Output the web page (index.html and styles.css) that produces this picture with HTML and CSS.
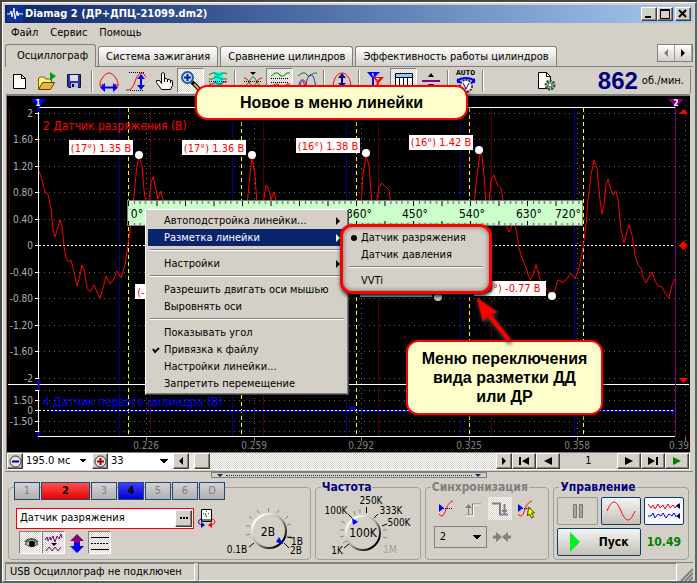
FILE: index.html
```
<!DOCTYPE html>
<html lang="ru">
<head>
    <meta charset="UTF-8">
    <meta name="viewport" content="width=device-width, initial-scale=1.0">
    <title>Diamag 2</title>
    <link rel="stylesheet" href="styles.css">
</head>
<body>
<div class="window">

    <!-- Заголовок -->
    <header class="titlebar">
        <svg class="app-icon" width="16" height="16" viewBox="0 0 16 16">
            <rect width="16" height="16" fill="#10309c"/>
            <path d="M0 8h3l1-3 1 6 2-9 1 11 2-8 1 5 1-3 1 1h3" fill="none" stroke="#fff"/>
        </svg>
        <h1 class="title">Diamag 2 (ДР+ДПЦ-21099.dm2)</h1>
        <div class="window-buttons">
            <button class="btn3d" aria-label="Свернуть"><svg width="10" height="10"><path d="M1 8h6" stroke="#000" stroke-width="2"/></svg></button>
            <button class="btn3d" aria-label="Развернуть"><svg width="10" height="10"><path d="M.5 0v9.5h9V1" fill="none" stroke="#000"/><path d="M0 1h10" stroke="#000" stroke-width="2"/></svg></button>
            <button class="btn3d close" aria-label="Закрыть"><svg width="10" height="10"><path d="M1 1l7 7M8 1l-7 7" stroke="#000" stroke-width="2"/></svg></button>
        </div>
    </header>

    <nav class="menubar">
        <a href="#">Файл</a>
        <a href="#">Сервис</a>
        <a href="#">Помощь</a>
    </nav>

    <!-- Вкладки -->
    <div class="tabs">
        <button class="tab active">Осциллограф</button>
        <button class="tab">Система зажигания</button>
        <button class="tab">Сравнение цилиндров</button>
        <button class="tab">Эффективность работы цилиндров</button>
        <div class="tab-scroll">
            <button aria-label="Назад"><svg width="6" height="8"><path d="M5 0v8L1 4z" fill="#808080"/></svg></button>
            <button aria-label="Вперёд"><svg width="6" height="8"><path d="M1 0v8l4-4z"/></svg></button>
        </div>
    </div>

    <!-- Панель инструментов -->
    <div class="toolbar">
        <button class="tool" aria-label="Новый"><svg width="24" height="24"><path d="M4.5 5.5h8l4 4v10h-12z" fill="#fff" stroke="#000"/><path d="M12.5 5.5v4h4" fill="none" stroke="#000"/></svg></button>
        <button class="tool" aria-label="Открыть"><svg width="24" height="24"><path d="M2.500 20V9l2-1h4l1 2h6v4" fill="#fff080" stroke="#806000"/><path d="M2.500 20.500l4-7h12l-4 7z" fill="#e8b838" stroke="#604000"/><path d="M14 3v9l6-5z" fill="#00a020"/></svg></button>
        <button class="tool" aria-label="Сохранить"><svg width="24" height="24"><path d="M4.5 5.5h13v13h-12l-1-1z" fill="#3030a0" stroke="#101040"/><path d="M7 6h8v6H7z" fill="#dde"/><path d="M8 14h7v5H8z" fill="#b8c4d8"/><path d="M9 15h2v3H9z" fill="#003"/></svg></button>
        <span class="divider"></span>
        <button class="tool" aria-label="Ширина"><svg width="24" height="24"><path d="M2 17C1 13 6 4 11 4s10 9 9 13l-3-2M2 17l3-2" fill="none" stroke="#f00"/><path d="M5 18.5h12" stroke="#00f" stroke-width="2"/><path d="M7 14v9l-5-4.5zM15 14v9l5-4.500z" fill="#00f"/></svg></button>
        <button class="tool" aria-label="Высота"><svg width="24" height="24"><path d="M1 21c11 2 7-18 17-17l3 4" fill="none" stroke="#f00"/><path d="M4 3.5h16M5 21.5h14" stroke="#000" stroke-dasharray="1 1"/><path d="M16 8v10" stroke="#00f" stroke-width="2"/><path d="M12 10h8l-4-5zM12 16h8l-4 5z" fill="#00f"/></svg></button>
        <button class="tool" aria-label="Рука"><svg width="24" height="24"><path d="M9.5 20.5l-5-7v-2h3l2 3V4.5q1.500-2 3 0v5q1.500-1 3 1 1.500-1 3 1 2-1 2 1v4l-2 4z" fill="#fff" stroke="#000"/><path d="M12.5 9v4M15.500 10v3M18.500 11v3" stroke="#000"/></svg></button>
        <button class="tool pressed" aria-label="Лупа"><svg width="24" height="24"><path d="M13 13l7 7" stroke="#000" stroke-width="4"/><path d="M15 15l5 5" stroke="#e0b030" stroke-width="2"/><circle cx="8.5" cy="8.5" r="5.5" fill="#c8e4ff" stroke="#2060a0" stroke-width="2"/><path d="M5 8.5h7M8.5 5v7" stroke="#0020b0" stroke-width="2"/></svg></button>
        <button class="tool" aria-label="Область"><svg width="24" height="24"><path d="M8 3h9v20H8z" fill="#0ff"/><path d="M3 6l3-2h3l3 2h2l3-2h2l2 1M3 10h4l2-2h3l3 2h6" fill="none" stroke="#080"/><path d="M3 15h4l2-2 3 2h3l3-2h3" fill="none" stroke="#c00"/><path d="M3 12.5h18" stroke="#000" stroke-dasharray="1 1"/></svg></button>
        <span class="divider"></span>
        <button class="tool" aria-label="Совместить оси"><svg width="24" height="24"><path d="M9 3h6l-3 3z"/><path d="M3 17c5 0 6-9 9-9s4 9 9 9" fill="none" stroke="#080"/><path d="M3 9c5 0 6 8 9 8s4-8 9-8" fill="none" stroke="#d00"/><path d="M3 12.5h18" stroke="#000" stroke-dasharray="1 1"/></svg></button>
        <button class="tool pressed" aria-label="Разделить оси"><svg width="24" height="24"><path d="M3 7l4-3h3l3 3h2l4-3h3" fill="none" stroke="#080"/><path d="M3 18l4-3h3l3 3h2l4-3h3" fill="none" stroke="#d00"/><path d="M3 9.5h18M3 13.5h18" stroke="#000" stroke-dasharray="1 1"/></svg></button>
        <button class="tool" aria-label="Наложить"><svg width="24" height="24"><path d="M3 7l4-3h3l3 3h2l4-3h3" fill="none" stroke="#080"/><path d="M3 20c3-15 6-9 7 0M10 20c3-19 9-19 11 0" fill="none" stroke="#22d"/><path d="M4 20c3-12 6-12 8 0" fill="none" stroke="#d00"/></svg></button>
        <span class="divider"></span>
        <button class="tool" aria-label="Амплитуда"><svg width="24" height="24"><path d="M3 19C3 10 7 4 12 4s9 6 9 15" fill="none" stroke="#f00"/><path d="M12 7v10" stroke="#008" stroke-width="2"/><path d="M8 9h8l-4-5zM8 14h8l-4 4z" fill="#008"/></svg></button>
        <span class="divider"></span>
        <button class="tool" aria-label="Маркеры"><svg width="24" height="24"><path d="M8 9v12" stroke="#00f" stroke-width="2"/><path d="M2 3h13L8 10z" fill="#00f"/><path d="M12.5 14v8" stroke="#f00" stroke-width="2"/><path d="M8 8h11l-6 7z" fill="#f00"/><path d="M7 4.5h1v3M11 9.5h3l-2 2" fill="none" stroke="#fff"/><path d="M15 16.500h6" stroke="#008"/></svg></button>
        <button class="tool pressed" aria-label="Таблица"><svg width="24" height="24"><path d="M3.500 4.500h17v17h-17z" fill="#fff" stroke="#000"/><path d="M4 5h16v3H4z" fill="#8cf"/><path d="M4 8.5h17M7.5 8v13M11.500 8v13M15.500 8v13" stroke="#000"/></svg></button>
        <button class="tool" aria-label="Линейка"><svg width="24" height="24"><path d="M9 8h6l-3-4zM9 15h6l-3 4z"/><path d="M3 12h18" stroke="#808" stroke-width="2"/></svg></button>
        <span class="divider"></span>
        <button class="tool auto" aria-label="Авто"><span>AUTO</span><svg width="22" height="16" viewBox="0 0 22 16"><circle cx="11" cy="9" r="6" fill="#fff" stroke="#333" stroke-dasharray="2 1" stroke-width="2"/><path d="M2 4c5-4 13-4 18 0" fill="none" stroke="#00f" stroke-width="2"/><path d="M2 1v5h5zM20 1v5h-5z" fill="#00f"/><path d="M8 6l3 6 3-6" fill="none" stroke="#00a"/></svg></button>
        <span class="divider"></span>
        <button class="tool page-setup" aria-label="Настройки страницы"><svg width="24" height="24"><path d="M4.5 3.5h8l4 4v12h-12z" fill="#fff" stroke="#000"/><path d="M12.5 3.5v4h4" fill="none" stroke="#000"/><circle cx="16" cy="16" r="4" fill="#cec" stroke="#354" stroke-width="3" stroke-dasharray="2 1"/><circle cx="16" cy="16" r="2" fill="#efe" stroke="#465"/></svg></button>
        <div class="rpm"><b>862</b> <span>об./мин.</span></div>
    </div>

    <!-- Осциллограмма -->
    <main class="scope">
        <svg class="chart" viewBox="7 96 683 356">
            <defs>
                <!-- деления линейки: 45 градусов -->
                <pattern id="ruler-ticks" x="128" y="201" width="28.5" height="24" patternUnits="userSpaceOnUse">
                    <path d="M.5 0v5M.5 20v4" stroke="#000"/>
                    <path d="M6.5 0v3M12 0v3M17.5 0v3M23.5 0v3M6.5 22v2M12 22v2M17.5 22v2M23.5 22v2" stroke="#445544"/>
                </pattern>
            </defs>
            <rect x="7" y="96" width="683" height="356"/>

            <!-- Сетка -->
            <path class="grid" d="M39 113.5H685M39 139.5H685M39 166.5H685M39 192.5H685M39 219.5H685M39 272.5H685M39 298.5H685M39 325.5H685M39 351.5H685M39 378.5H685M39 390.5H675M39 400.5H675M39 421.5H675M39 431.5H675"/>
            <path class="grid" d="M146.5 113V436M254.5 113V436M361.5 113V436M577.5 113V436M685.5 100V436"/>
            <path class="mark-blue" d="M119.5 108V436M232.5 108V436M346.5 108V436M460.5 108V436M574.5 108V436"/>
            <path class="mark-red" d="M9.5 108V436M150.5 108V436M263.5 108V436M378.5 108V436M491.5 108V436"/>
            <path class="mark-yellow" d="M128.5 108V436M241.5 108V436M356.5 108V436M469.5 108V436M583.5 108V436"/>

            <!-- Оси -->
            <path class="axis" d="M38 107.5H675M8 384.5H689M38 436.5H675M38.5 107V436"/>
            <path class="axis" d="M35 113.5h4M35 139.5h4M35 166.5h4M35 192.5h4M35 219.5h4M35 245.5h4M35 272.5h4M35 298.5h4M35 325.5h4M35 351.5h4M35 378.5h4M35 390.5h4M35 400.5h4M35 410.5h4M35 421.5h4M35 431.5h4"/>
            <path class="axis-ticks" d="M146.5 437v4M254.5 437v4M361.5 437v4M469.5 437v4M577.5 437v4M685.5 437v4"/>
            <path class="zero" d="M39 245.5H675"/>
            <path d="M50 411H350l1-3h3l1 3H675" fill="none" stroke="#00f" stroke-width="2"/>
            <path class="zero" d="M39 410.5H675"/>
            <path d="M38.5 104v8M38.5 379v11M38.5 432v4" stroke="#00f" stroke-width="2"/>
            <path d="M675.5 106V436" stroke="#800080"/>

            <g class="y-labels">
                <text x="33" y="117">2</text>
                <text x="33" y="143">1.60</text>
                <text x="33" y="170">1.20</text>
                <text x="33" y="196">0.80</text>
                <text x="33" y="223">0.40</text>
                <text x="33" y="249">0</text>
                <text x="33" y="276">-0.40</text>
                <text x="33" y="302">-0.80</text>
                <text x="33" y="329">-1.20</text>
                <text x="33" y="355">-1.60</text>
                <text x="33" y="382">-2</text>
                <text x="33" y="404">1.50</text>
                <text x="33" y="414">0</text>
                <text x="33" y="425">-1.50</text>
            </g>
            <g class="x-labels">
                <text x="146" y="449">0.226</text>
                <text x="254" y="449">0.259</text>
                <text x="361" y="449">0.292</text>
                <text x="469" y="449">0.325</text>
                <text x="577" y="449">0.358</text>
                <text x="679" y="449">0.39</text>
            </g>

            <text class="series red" x="43" y="130">2 Датчик разряжения (В)</text>
            <text class="series blue" x="43" y="406">4 Датчик первого цилиндра (В)</text>

            <!-- Сигнал разряжения -->
            <path class="signal" d="M39 171L42 180 45 192 48 194 51 208 53 230 55 237 58 227 60 220 62 226 64 246 66 258 68 262 71 260 74 272 77 286 80 275 82 265 84 270 87 288 90 292 94 285 97 292 100 298 103 288 106 276 110 284 113 280 117 271 121 278 125 265 128 245 131 222 133 205 135 185 137 165 139 157 142 165 144 190 146 205 149 200 151 182 153 177 156 190 158 199 161 191 163 200 166 230 170 240"/>
            <path class="signal" d="M243 240L247 205 250 175 252 157 255 175 257 205 260 212 263 205 266 185 269 190 271 200 274 192 277 205 280 230"/>
            <path class="signal" d="M357 240L361 205 363 175 366 155 369 165 372 205 374 212 376 205 379 188 382 183 386 187 389 190 391 205 394 230"/>
            <path class="signal" d="M470 240L474 205 477 175 480 154 482 156 484 175 486 205 487 212 489 205 491 180 494 175 497 184 501 188 504 205 506 225 509 232 513 224 516 228 519 248 522 258 526 268 530 280 533 275 536 265 539 275 541 283 546 288 552 296 555 290 558 280 563 282 566 280 571 273 575 279 579 268 583 248 586 225 588 200 591 175 594 160 597 168 600 200 602 214 604 205 606 185 608 179 611 190 613 195 616 191 618 200 621 230 624 243 627 232 629 225 632 235 635 255 638 265 641 268 643 277 646 283 649 277 652 272 655 281 658 286 662 287 665 293 669 298 672 285 675 279"/>

            <!-- Подписи экстремумов -->
            <path d="M69 140h64v15h-64zM182 140h64v15h-64zM296 138h64v15h-64zM409 135h64v15h-64zM135 284h40v15h-40zM474 281h72v15h-72z" fill="#fff"/>
            <path d="M360 282h72v15h-72z" fill="#bbb"/>
            <g class="peak">
                <text x="101" y="152">(17°) 1.35 В</text>
                <text x="214" y="152">(17°) 1.36 В</text>
                <text x="328" y="150">(16°) 1.38 В</text>
                <text x="441" y="146">(16°) 1.42 В</text>
                <text x="141" y="296">(-</text>
                <text x="510" y="292">(-9°) -0.77 В</text>
            </g>
            <g fill="#fff">
                <circle cx="139" cy="155" r="4"/>
                <circle cx="252" cy="155" r="4"/>
                <circle cx="366" cy="153" r="4"/>
                <circle cx="479" cy="150" r="4"/>
                <circle cx="438" cy="297" r="4" fill="#ccc"/>
                <circle cx="552" cy="296" r="4"/>
            </g>

            <!-- Линейка -->
            <rect x="127.5" y="200.5" width="455" height="25" fill="#ccffcc" stroke="#808080"/>
            <rect x="128" y="201" width="454" height="24" fill="url(#ruler-ticks)"/>
            <g class="degrees">
                <text x="137" y="218">0°</text>
                <text x="359" y="218">360°</text>
                <text x="415" y="218">450°</text>
                <text x="472" y="218">540°</text>
                <text x="529" y="218">630°</text>
                <text x="568" y="218">720°</text>
            </g>

            <!-- Маркеры -->
            <path d="M31 99h15l-7.5 8z" fill="#00f"/>
            <path d="M668 99h16l-8 8z" fill="#800080"/>
            <text class="marker" x="38" y="106">1</text>
            <text class="marker" x="676" y="106">2</text>
            <path d="M679 114h9l-4.5-5zM679 245.5l4.5-4.5 4.5 4.5-4.5 4.5zM679 378h9l-4.5 5z" fill="#f00"/>
        </svg>

        <!-- Контекстное меню -->
        <div class="popup context-menu">
            <button class="item has-sub">Автоподстройка линейки...</button>
            <button class="item has-sub selected">Разметка линейки</button>
            <hr>
            <button class="item has-sub">Настройки</button>
            <hr>
            <button class="item">Разрешить двигать оси мышью</button>
            <button class="item">Выровнять оси</button>
            <hr>
            <button class="item">Показывать угол</button>
            <button class="item"><svg class="check" width="8" height="8"><path d="M1 3l2 3 4-4" fill="none" stroke="#000" stroke-width="2"/></svg>Привязка к файлу</button>
            <button class="item">Настройки линейки...</button>
            <button class="item">Запретить перемещение</button>
        </div>
        <div class="popup submenu">
            <button class="item radio">Датчик разряжения</button>
            <button class="item">Датчик давления</button>
            <hr>
            <button class="item">VVTi</button>
        </div>

        <div class="callout callout-top">Новое в меню линейки</div>
        <div class="callout callout-bottom">Меню переключения<br>вида разметки ДД<br>или ДР</div>
        <svg class="arrow" width="44" height="54" viewBox="0 0 44 54">
            <path d="M4 4l20 14-6 2 20 26-3 2-21-26-4 5z" fill="#f00" stroke="#c00"/>
        </svg>
    </main>

    <!-- Масштаб и прокрутка -->
    <div class="scrollrow">
        <button class="btn3d round" aria-label="Уменьшить"><svg width="13" height="13"><circle cx="6.5" cy="6.5" r="5.5" fill="#e8e4e0" stroke="#333"/><path d="M3 6.5h7" stroke="#00a" stroke-width="2"/></svg></button>
        <select class="scale-time" aria-label="Развёртка"><option>195.0 мс</option></select>
        <button class="btn3d round" aria-label="Увеличить"><svg width="13" height="13"><circle cx="6.5" cy="6.5" r="5.5" fill="#e8e4e0" stroke="#333"/><path d="M3 6.5h7M6.5 3v7" stroke="#a00" stroke-width="2"/></svg></button>
        <select class="scale-num" aria-label="Масштаб"><option>33</option></select>
        <button class="btn3d step" aria-label="Влево"><svg width="6" height="8"><path d="M5 0v8L1 4z"/></svg></button>
        <div class="track"><div class="thumb btn3d"></div></div>
        <button class="btn3d step" aria-label="Вправо"><svg width="6" height="8"><path d="M1 0v8l4-4z"/></svg></button>
        <button class="btn3d nav" aria-label="Первый"><svg width="12" height="8"><path d="M1 0h2v8H1zM11 0v8L4 4z"/></svg></button>
        <button class="btn3d nav" aria-label="Предыдущий"><svg width="8" height="8"><path d="M8 0v8L0 4z"/></svg></button>
        <output class="frame-num">1</output>
        <button class="btn3d nav" aria-label="Следующий"><svg width="8" height="8"><path d="M0 0v8l8-4z"/></svg></button>
        <button class="btn3d nav" aria-label="Последний"><svg width="12" height="8"><path d="M9 0h2v8H9zM1 0v8l7-4z"/></svg></button>
        <button class="btn3d nav" aria-label="Воспроизвести"><svg width="8" height="8"><path d="M0 0v8l8-4z" fill="#008000"/></svg></button>
    </div>
    <div class="splitter"><div class="grip"><i></i></div></div>

    <!-- Управление -->
    <div class="panel">
        <section class="group channel">
            <div class="channel-left">
                <div class="channels">
                    <button>1</button>
                    <button class="ch-red">2</button>
                    <button>3</button>
                    <button class="ch-blue">4</button>
                    <button>5</button>
                    <button>6</button>
                    <button>D</button>
                </div>
                <div class="sensor-row">
                    <div class="sensor">
                        <input type="text" value="Датчик разряжения" aria-label="Датчик">
                        <button class="btn3d" aria-label="Выбрать"><svg width="10" height="4"><path d="M1 1h2v2H1zM4 1h2v2H4zM7 1h2v2H7z"/></svg></button>
                    </div>
                    <button class="tool" aria-label="Шкала"><svg width="20" height="20"><path d="M4.5 1.5h10v12h-10z" fill="#fff" stroke="#000"/><path d="M5 11h9v2H5z" fill="#777"/><path d="M6 5l1 1M9.5 3v1M12 5l-1 1M9.5 9L8 5" stroke="#444"/><path d="M4 11c-3 1-4 5 1 6" fill="none" stroke="#00a"/><path d="M4 14v6l4-3z" fill="#00a"/><path d="M15 11c4 1 4 5-1 6" fill="none" stroke="#f00"/><path d="M15 14v6l-4-3z" fill="#f00"/></svg></button>
                </div>
                <div class="view-row">
                    <button class="tool pressed" aria-label="Видимость"><svg width="20" height="20"><path d="M4 11q6-6 13 0-6 5-13 0z" fill="#ccc" stroke="#444"/><circle cx="11" cy="11" r="3"/><path d="M4 9q6-6 13 0" fill="none" stroke="#554" stroke-width="2"/></svg></button>
                    <button class="tool pressed" aria-label="Фильтр"><svg width="20" height="20"><path d="M1 7l2-3 1 4 2-4 1 3 2-4 2 6 2-6 2 3 2-5 1 4M2 18l3-4 3 4 3-4 3 4 3-4" fill="none" stroke="#800080"/><path d="M7 10h6l-3 3z"/></svg></button>
                    <button class="tool" aria-label="Сдвиг"><svg width="20" height="20"><path d="M10 1l7 7h-4v2H7V8H3z" fill="#800080"/><path d="M10 20l-7-7h4v-3h6v3h4z" fill="#00f"/></svg></button>
                    <button class="tool pressed" aria-label="Линии"><svg width="20" height="20"><path d="M1 4.5h18M1 16.5h18" stroke="#000"/><path d="M1 10.5h18" stroke="#000" stroke-dasharray="2 1"/></svg></button>
                </div>
            </div>
            <svg class="knob" width="94" height="70" viewBox="218 488 94 70">
                <defs>
                    <linearGradient id="rim" x1="0" y1="0" x2="1" y2="1">
                        <stop offset="0.15" stop-color="#fff"/><stop offset="0.5" stop-color="#a8a49e"/><stop offset="0.85" stop-color="#000"/>
                    </linearGradient>
                </defs>
                <path d="M261.5 508v4M250 510l2 3M272 510l-2 3M242 516l3 3M281 516l-3 3M239 526h4M280 525l4-1M239 535l4-1M281 536l4 1" stroke="#888"/>
                <path d="M242 547l5-4M277 543l5 5M280 537l5 1" stroke="#000"/>
                <circle cx="262" cy="531" r="17" fill="#d4d0c8" stroke="url(#rim)" stroke-width="2"/>
                <path d="M269 542l3-5 4 7z" fill="#00f"/>
                <text class="knob-value" x="261" y="536">2В</text>
                <text x="230" y="553">0.1В</text>
                <text x="290" y="545">1В</text>
                <text x="289" y="554">2В</text>
            </svg>
        </section>

        <fieldset class="group freq">
            <legend>Частота</legend>
            <svg class="knob" width="104" height="64" viewBox="317 494 104 64">
                <path d="M355 510l1 4M361 508v4M342 520l4 2M341 529h4M341 536l4-1M344 542l4-2M384 529h4M384 536l4 1" stroke="#888"/>
                <path d="M367.5 506v6M349 513l4 4M379 513l-4 4M383 525l5-2M345 547l5-4" stroke="#000"/>
                <circle cx="364" cy="532" r="17" fill="#d4d0c8" stroke="url(#rim)" stroke-width="2"/>
                <path d="M353 517l6 4-5 3z" fill="#00f"/>
                <text class="knob-value" x="364" y="536">100K</text>
                <text x="372" y="503">250K</text>
                <text x="337" y="513">100K</text>
                <text x="392" y="513">333K</text>
                <text x="400" y="525">500K</text>
                <text x="338" y="553">1K</text>
                <text x="391" y="552" class="off">1M</text>
            </svg>
        </fieldset>

        <fieldset class="group sync">
            <legend>Синхронизация</legend>
            <div class="sync-row">
                <button class="tool" aria-label="Уровень"><svg width="20" height="20"><path d="M3 15c7 8 5-11 14-13" fill="none" stroke="#f00"/><path d="M3 9.5h14" stroke="#00a" stroke-dasharray="1 1"/><path d="M3 5v8l5-4z" fill="#00f"/></svg></button>
                <button class="tool" aria-label="Фронт"><svg width="20" height="20"><path d="M3 16h6.500V5H18M5.5 15V8" fill="none" stroke="#808080"/><path d="M2 9h7L5.5 5z" fill="#808080"/><path d="M3 17h7.500V6H18" fill="none" stroke="#fff"/></svg></button>
                <button class="tool dither" aria-label="Спад"><svg width="20" height="20"><path d="M2 4.5h8v11h8M14.5 5v7" fill="none" stroke="#808080" stroke-width="2"/><path d="M11 11h7l-3.5 4z" fill="#808080"/></svg></button>
                <button class="tool" aria-label="Указать"><svg width="20" height="20"><path d="M1 15c7 8 5-11 14-13" fill="none" stroke="#f00"/><path d="M1 9.5h14" stroke="#00a" stroke-dasharray="1 1"/><path d="M1 5v8l5-4z" fill="#00f"/><path d="M11.5 8l6 6h-3l2 4-2 1-2-4-2 2z" fill="#ff0" stroke="#440"/></svg></button>
            </div>
            <div class="sync-row">
                <select class="sync-channel" aria-label="Канал"><option>2</option></select>
                <button class="tool" aria-label="К центру"><svg width="20" height="20"><path d="M1 10h4M15 10h4" stroke="#808080" stroke-width="3"/><path d="M4 5v10l6-5zM16 5v10l-6-5z" fill="#808080"/></svg></button>
            </div>
        </fieldset>

        <fieldset class="group control">
            <legend>Управление</legend>
            <div class="control-grid">
                <button class="glossy off" aria-label="Пауза"><svg width="14" height="16"><path d="M2.5 1.5h3v13h-3zM8.5 1.5h3v13h-3z" fill="#a8a8a8" stroke="#777"/></svg></button>
                <button class="glossy" aria-label="Синус"><svg width="30" height="20"><path d="M1 10C6-2 10-2 15 10s9 12 14 0" fill="none" stroke="#f00"/></svg></button>
                <button class="glossy light" aria-label="Поток"><svg width="34" height="20"><path d="M1 3l3 4 2-3 2 4 3-5 2 4 3-3 2 4 3-5 2 4 3-3 2 3 3-4" fill="none" stroke="#f00"/><path d="M1 15l3 0 2-3 2 5 3-4 3 2 2-3 3 5 3-4 3 2 2-3 2 4" fill="none" stroke="#00f"/><path d="M33 2v6l-4-3zM33 12v6l-4-3z" fill="#007"/></svg></button>
                <button class="glossy start"><svg width="10" height="20"><path d="M0 0v20l10-10z" fill="#00f020"/></svg><span>Пуск</span></button>
                <output class="time">10.49</output>
            </div>
        </fieldset>
    </div>

    <footer class="statusbar">
        <div class="status-cell">USB Осциллограф не подключен</div>
        <div class="status-cell rest"></div>
        <svg class="size-grip" width="13" height="17"><path d="M1 17L13 5M5 17l8-8M9 17l4-4" stroke="#808080" stroke-width="2"/></svg>
    </footer>
</div>
</body>
</html>
```

FILE: styles.css
```
* {
    box-sizing: border-box;
}

body {
    margin: 0;
    padding: 2px 0 0 2px;
    background: #4a4648;
    font: 11px/16px "DejaVu Sans Condensed", "Noto Sans", sans-serif;
    color: #000;
}

button,
select,
input {
    margin: 0;
    padding: 0;
    border: 0;
    border-radius: 0;
    background: none;
    color: inherit;
    font: inherit;
}

svg {
    display: block;
    flex: none;
}

.window {
    padding: 2px 2px 0;
    background: #d4d0c8;
    border: 1px solid #fff;
    border-right: 2px solid #606060;
    border-bottom: 2px solid #606060;
}

/* Выпуклая кнопка */
.btn3d {
    display: flex;
    align-items: center;
    justify-content: center;
    background: #d4d0c8;
    border: 1px solid;
    border-color: #fff #404040 #404040 #fff;
    box-shadow: inset -1px -1px #808080;
}

/* Заголовок */
.titlebar {
    display: flex;
    align-items: center;
    gap: 2px;
    height: 18px;
    padding: 0 2px;
    background: linear-gradient(90deg, #0a246a, #a6caf0);
    color: #fff;
}

.title {
    flex: 1;
    margin: 0;
    font-size: 11px;
    line-height: 18px;
}

.window-buttons {
    display: flex;
}

.window-buttons .btn3d {
    width: 16px;
    height: 14px;
}

.window-buttons .close {
    margin-left: 2px;
}

.menubar {
    display: flex;
    gap: 12px;
    height: 21px;
    padding: 2px 6px;
}

.menubar a {
    color: #000;
    text-decoration: none;
}

/* Вкладки */
.tabs {
    display: flex;
    align-items: flex-end;
    gap: 2px;
    height: 23px;
    border-bottom: 1px solid #808080;
}

.tab {
    height: 20px;
    padding: 0 7px;
    border: 1px solid #808080;
    border-bottom: 0;
    border-radius: 3px 3px 0 0;
    background: linear-gradient(#fff, #d4d0c8);
    white-space: nowrap;
}

.tab.active {
    height: 23px;
    margin-bottom: -1px;
    padding: 0 7px 0 11px;
    background: #d4d0c8;
}

.tab-scroll {
    display: flex;
    align-self: flex-start;
    margin-left: auto;
    border: 1px solid #808080;
}

.tab-scroll button {
    display: flex;
    align-items: center;
    justify-content: center;
    width: 17px;
    height: 16px;
    background: linear-gradient(#fff, #d4d0c8);
    border-right: 1px solid #a0a0a0;
}

/* Панель инструментов */
.toolbar {
    display: flex;
    align-items: center;
    height: 27px;
    padding: 0 2px;
}

.tool {
    display: flex;
    align-items: center;
    justify-content: center;
    width: 27px;
    height: 25px;
}

.pressed,
.dither,
.track {
    background: repeating-conic-gradient(#fff 0 25%, #d4d0c8 0 50%) 0 0 / 2px 2px;
}

.pressed {
    border: 1px solid;
    border-color: #808080 #fff #fff #808080;
}

.divider {
    width: 2px;
    height: 22px;
    margin: 0 3px;
    border-left: 1px solid #808080;
    border-right: 1px solid #fff;
}

.auto {
    flex-direction: column;
}

.auto span {
    font: bold 8px/8px "Liberation Mono", monospace;
}

.page-setup {
    margin-left: 45px;
}

.rpm {
    display: flex;
    align-items: center;
    gap: 4px;
    margin-left: auto;
    padding-right: 6px;
    border-right: 1px solid #808080;
}

.rpm b {
    color: #000080;
    font: bold 24px/24px "Liberation Sans", sans-serif;
}

/* Осциллограмма */
.scope {
    position: relative;
    margin: 0 3px 0 1px;
    border-top: 2px solid #808080;
    border-left: 1px solid #808080;
}

.chart {
    width: 100%;
    height: auto;
}

.grid {
    fill: none;
    stroke: #606060;
    stroke-dasharray: 1 4;
}

.mark-blue {
    stroke: #000090;
}

.mark-red {
    stroke: #500000;
}

.mark-yellow {
    stroke: #ffff00;
    stroke-dasharray: 4 3;
}

.axis {
    stroke: #fff;
}

.axis-ticks {
    stroke: #808080;
}

.zero {
    stroke: #fff;
    stroke-dasharray: 2 2;
}

.signal {
    fill: none;
    stroke: #f00;
}

.y-labels {
    fill: #b0b0b0;
    font-size: 10px;
    text-anchor: end;
}

.x-labels {
    fill: #808080;
    font-size: 10px;
    text-anchor: middle;
}

.series {
    font-size: 12px;
}

.series.red,
.peak {
    fill: #f00;
}

.series.blue {
    fill: #00f;
}

.peak {
    font-size: 11px;
    text-anchor: middle;
}

.degrees {
    font-size: 12px;
    text-anchor: middle;
}

.marker {
    fill: #fff;
    font-size: 8px;
    font-weight: bold;
    text-anchor: middle;
}

/* Всплывающие меню */
.popup {
    position: absolute;
    background: #d4d0c8;
}

.popup hr {
    height: 2px;
    margin: 3px 2px 4px;
    border: 0;
    border-top: 1px solid #808080;
    border-bottom: 1px solid #fff;
}

.context-menu {
    left: 138px;
    top: 113px;
    width: 204px;
    padding: 2px;
    border: 1px solid;
    border-color: #fff #404040 #404040 #fff;
    box-shadow: inset -1px -1px #808080;
}

.item {
    position: relative;
    display: block;
    width: 100%;
    height: 17px;
    padding-left: 16px;
    line-height: 17px;
    text-align: left;
    white-space: nowrap;
}

.item.selected {
    background: #0a246a;
    color: #fff;
}

.has-sub::after {
    content: "";
    position: absolute;
    right: 6px;
    top: 5px;
    border-left: 4px solid;
    border-top: 4px solid transparent;
    border-bottom: 4px solid transparent;
}

.check {
    position: absolute;
    left: 4px;
    top: 5px;
}

.submenu {
    left: 333px;
    top: 128px;
    width: 152px;
    padding: 2px 4px 2px 2px;
    border: 3px solid #f00;
    border-radius: 12px;
    box-shadow: 1px 2px 4px #000, inset 0 0 5px #666;
}

.submenu hr {
    margin: 3px 2px 4px 4px;
}

.radio::before {
    content: "";
    position: absolute;
    left: 6px;
    top: 6px;
    width: 6px;
    height: 6px;
    border-radius: 50%;
    background: #000;
}

/* Выноски */
.callout {
    position: absolute;
    border: 2px solid #f00;
    border-radius: 12px;
    background: #ffffcc;
    box-shadow: 2px 3px 4px rgba(0, 0, 0, 0.5);
    font: bold 16px/19px "Liberation Sans", sans-serif;
    text-align: center;
    white-space: nowrap;
}

.callout-top {
    left: 188px;
    top: -11px;
    width: 273px;
    padding: 6px;
}

.callout-bottom {
    left: 399px;
    top: 244px;
    width: 197px;
    padding: 7px;
}

.arrow {
    position: absolute;
    left: 466px;
    top: 198px;
    filter: drop-shadow(1px 2px 2px #444);
}

/* Прокрутка */
.scrollrow {
    display: flex;
    height: 18px;
    margin: 0 3px 0 1px;
    border: 1px solid;
    border-color: #808080 #fff #fff #808080;
    background: #fff;
}

.round {
    width: 16px;
}

.scrollrow select,
.sync-channel {
    appearance: none;
    background: conic-gradient(from -45deg at 50% 100%, #000 90deg, transparent 0) right 5px center / 8px 4px no-repeat;
    background: linear-gradient(45deg, transparent 50%, #000 50%) right 9px center / 4px 4px no-repeat,
        linear-gradient(-45deg, transparent 50%, #000 50%) right 5px center / 4px 4px no-repeat;
}

.scrollrow select {
    padding-left: 3px;
    background-color: #fff;
}

.scale-time {
    width: 69px;
}

.scale-num {
    width: 65px;
}

.step {
    width: 16px;
}

.nav {
    width: 24px;
}

.track {
    flex: 1;
    padding-left: 5px;
}

.thumb {
    width: 16px;
    height: 16px;
}

.frame-num {
    width: 57px;
    background: #d4d0c8;
    text-align: center;
}

.splitter {
    height: 8px;
    margin-top: 1px;
    border-top: 1px solid #808080;
}

.grip {
    display: flex;
    justify-content: space-between;
    align-items: center;
    width: 40%;
    height: 6px;
    margin: 0 auto;
    padding: 0 5px;
    border: 1px solid #808080;
}

.grip::before,
.grip::after {
    content: "";
    border-top: 3px solid #0a246a;
    border-left: 3px solid transparent;
    border-right: 3px solid transparent;
}

.grip i {
    flex: 1;
    margin: 0 3px;
    border-top: 1px dotted #0a246a;
}

/* Нижняя панель */
.panel {
    display: flex;
    gap: 4px;
    padding: 0 4px 2px 3px;
}

.group {
    min-width: 0;
    margin: 0;
    padding: 0;
    border: 1px solid #a0a0a0;
    border-radius: 4px;
}

.group legend {
    height: 16px;
    margin-left: 5px;
    padding: 0 1px;
    color: #000080;
    font-size: 12px;
    font-weight: bold;
}

.channel {
    flex: 304;
    display: flex;
    justify-content: space-between;
    margin-top: 8px;
}

.freq {
    flex: 105;
}

.sync {
    flex: 124;
}

.control {
    flex: 135;
}

.channel-left {
    padding-left: 5px;
    margin-top: -6px;
}

.channels {
    display: flex;
    gap: 1px;
}

.channels button {
    width: 26px;
    height: 18px;
    border: 1px solid #204878;
    background: linear-gradient(#d4d4d4, #b0b0b0);
    color: #808080;
    line-height: 16px;
}

.channels .ch-red {
    width: 49px;
    background: linear-gradient(#ff5050, #e80000);
    color: #000;
    font-weight: bold;
}

.channels .ch-blue {
    background: linear-gradient(#4040ff, #0000d0);
    color: #000;
    font-weight: bold;
}

.sensor-row {
    display: flex;
    align-items: center;
    gap: 1px;
    margin-top: 7px;
    padding-left: 2px;
}

.sensor {
    display: flex;
    width: 178px;
    height: 21px;
    padding: 1px;
    border: 1px solid #f00;
    background: #fff;
}

.sensor input {
    flex: 1;
    min-width: 0;
    padding-left: 2px;
}

.sensor .btn3d {
    width: 17px;
}

.sensor-row .tool {
    width: 24px;
    height: 22px;
}

.view-row {
    display: flex;
    padding: 2px 0 0 5px;
}

.view-row .tool {
    width: 23px;
    height: 23px;
}

.knob {
    font-size: 10px;
    text-anchor: middle;
}

.knob-value {
    font-size: 12px;
}

.knob .off {
    fill: #a0a0a0;
}

.freq .knob {
    margin: 0 auto;
}

.sync legend {
    color: #808080;
}

.sync-row {
    display: flex;
    align-items: center;
    gap: 3px;
    padding: 2px 8px 1px;
}

.sync-row .tool {
    width: 24px;
    height: 23px;
}

.sync-channel {
    width: 53px;
    height: 22px;
    padding-left: 5px;
    border: 1px solid #808080;
}

.sync-row + .sync-row {
    padding-top: 4px;
}

.control-grid {
    display: grid;
    grid-template-columns: repeat(3, 1fr);
    gap: 3px;
    padding: 2px 4px 2px 3px;
}

.glossy {
    display: flex;
    align-items: center;
    justify-content: center;
    height: 28px;
    border: 1px solid #103c70;
    border-radius: 2px;
    background: linear-gradient(#f4f4f2, #c4c0b8);
}

.glossy.off {
    border-color: #999;
    background: #d4d0c8;
}

.glossy.light {
    background: #f8f8ff;
}

.glossy.start {
    grid-column: span 2;
    gap: 19px;
    font-size: 12px;
    font-weight: bold;
}

.time {
    align-self: center;
    color: #008000;
    font-size: 12px;
    font-weight: bold;
    text-align: center;
}

/* Строка состояния */
.statusbar {
    display: flex;
    gap: 3px;
    height: 19px;
    border-top: 1px solid #808080;
}

.status-cell {
    width: 190px;
    padding-left: 4px;
    border: 1px solid;
    border-color: #808080 #fff #fff #808080;
    white-space: nowrap;
}

.status-cell.rest {
    flex: 1;
}

.size-grip {
    align-self: flex-end;
}
```
